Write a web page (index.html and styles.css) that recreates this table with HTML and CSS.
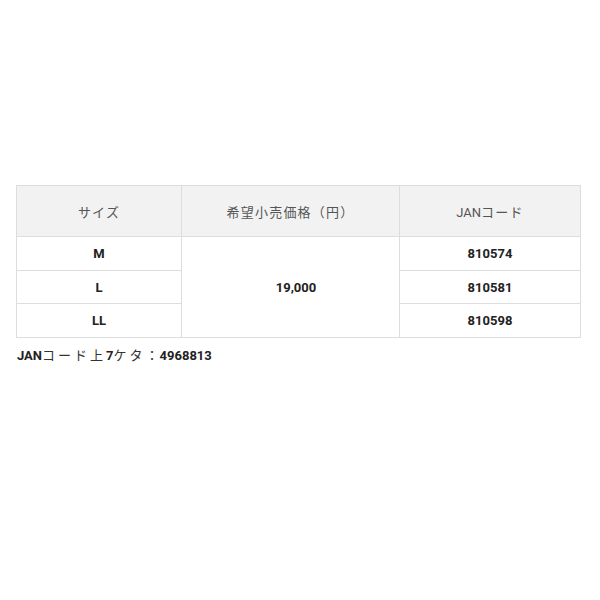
FILE: index.html
```html
<!DOCTYPE html>
<html lang="ja">
<head>
<meta charset="utf-8">
<link rel="stylesheet" href="styles.css">
</head>
<body>
<div class="wrap">
<table class="spec">
<colgroup><col class="c1"><col class="c2"><col class="c3"></colgroup>
<thead>
<tr><th><span class="ja">サイズ</span></th><th><span class="ja">希望小売価格（円）</span></th><th>JAN<span class="ja">コード</span></th></tr>
</thead>
<tbody>
<tr><td>M</td><td rowspan="3" class="price">19,000</td><td>810574</td></tr>
<tr><td>L</td><td>810581</td></tr>
<tr><td>LL</td><td>810598</td></tr>
</tbody>
</table>
<p class="note">JAN<span class="ja">コード上</span>7<span class="ja">ケタ</span><span class="colon">：</span>4968813</p>
</div>
</body>
</html>
```
FILE: styles.css
```css
html, body { margin: 0; padding: 0; background: #fff; }
body { font-family: Roboto, "Noto Sans CJK JP", sans-serif; color: #222; }
.wrap { padding: 185px 20px 0 16px; }
.spec { border-collapse: collapse; width: 564px; table-layout: fixed; font-size: 13px; }
.c1 { width: 165px; } .c2 { width: 218px; } .c3 { width: 181px; }
.spec th, .spec td { border: 1px solid #ddd; text-align: center; vertical-align: middle; }
.spec th { background: #f2f2f2; color: #555; font-weight: normal; height: 50px; padding: 0; font-size: 13px; }
.spec th .ja { letter-spacing: 1.2px; }
.spec td { height: 32.7px; padding: 0; font-weight: bold; color: #222; }
.spec td.price { padding-left: 11px; }
.note { margin: 7px 0 0 1px; font-size: 13px; font-weight: bold; color: #222; }
.note .ja { font-weight: normal; letter-spacing: 3px; color: #333; }
.note .colon { font-weight: normal; color: #333; margin-right: 1px; }
```
